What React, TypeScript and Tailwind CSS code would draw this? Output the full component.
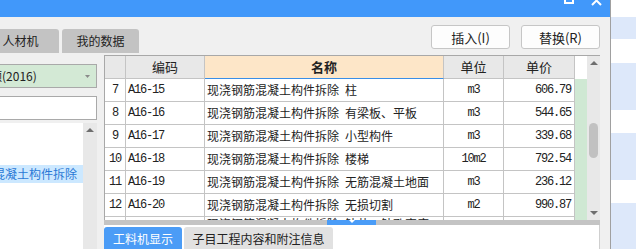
import React from "react"

const rows = [
  { no: "7", code: "A16-15", name: "现浇钢筋混凝土构件拆除\u2002柱", unit: "m3", price: "606.79" },
  { no: "8", code: "A16-16", name: "现浇钢筋混凝土构件拆除\u2002有梁板、平板", unit: "m3", price: "544.65" },
  { no: "9", code: "A16-17", name: "现浇钢筋混凝土构件拆除\u2002小型构件", unit: "m3", price: "339.68" },
  { no: "10", code: "A16-18", name: "现浇钢筋混凝土构件拆除\u2002楼梯", unit: "10m2", price: "792.54" },
  { no: "11", code: "A16-19", name: "现浇钢筋混凝土构件拆除\u2002无筋混凝土地面", unit: "m3", price: "236.12" },
  { no: "12", code: "A16-20", name: "现浇钢筋混凝土构件拆除\u2002无损切割", unit: "m2", price: "990.87" },
]

const sans = "font-['Noto_Sans_CJK_SC',sans-serif]"
const mono = "font-['Liberation_Mono','Noto_Sans_CJK_SC',monospace] text-[12px] tracking-[-1.2px]"
const cell = "border-r border-b border-[#c4c4c4] h-[23px] flex items-center overflow-hidden whitespace-nowrap"

function Arrow({ down = false, color = "#6e6e6e" }: { down?: boolean; color?: string }) {
  return (
    <svg width="8" height="4" viewBox="0 0 8 4">
      <polygon points={down ? "0,0 8,0 4,4" : "4,0 8,4 0,4"} fill={color} />
    </svg>
  )
}

export default function App() {
  return (
    <div className={`w-[636px] h-[249px] overflow-hidden flex bg-white ${sans} text-[#222]`}>
      {/* dialog */}
      <div className="w-[611px] shrink-0 flex flex-col bg-[#f0f0f0] border-r border-[#a0a0a0]">
        <div className="h-[17px] bg-[#4198fa] flex justify-end">
          <svg width="50" height="17" viewBox="0 0 50 17">
            <rect x="5" y="-5" width="8" height="8" fill="none" stroke="white" strokeWidth="2" />
            <path d="M32 -4 L41 5 M41 -4 L32 5" stroke="white" strokeWidth="2" />
          </svg>
        </div>

        <div className="h-[38px] flex justify-between">
          <div className="flex items-end gap-[3px] ml-[-18px] pb-[2px]">
            {["人材机", "我的数据"].map((t) => (
              <div
                key={t}
                className="w-[77px] h-[24px] bg-[#c3c3c3] rounded-t-[3px] flex items-center justify-center text-[12px] leading-none"
              >
                {t}
              </div>
            ))}
          </div>
          <div className="flex gap-[11px] pt-[8px] pr-[10px]">
            {["插入(I)", "替换(R)"].map((t) => (
              <div
                key={t}
                className="w-[79px] h-[24px] bg-[#fdfdfd] border border-[#c6c6c6] rounded-[3px] flex items-center justify-center text-[13px] leading-none"
              >
                {t}
              </div>
            ))}
          </div>
        </div>

        <div className="flex-1 flex min-h-0">
          {/* left panel */}
          <div className="w-[97px] shrink-0 flex flex-col pt-[9px]">
            <div className="h-[24px] bg-[#d3e9d5] border border-[#a9a9a9] border-l-0 flex items-center justify-between overflow-hidden pr-[6px]">
              <span className="text-[12px] leading-none whitespace-nowrap ml-[-10px]">额(2016)</span>
              <svg width="5" height="3" viewBox="0 0 5 3">
                <polygon points="0,0 5,0 2.5,3" fill="#8a8a8a" />
              </svg>
            </div>
            <div className="mt-[8px] h-[24px] bg-white border border-[#a9a9a9] border-l-0" />
            <div className="mt-[3px] flex-1 bg-white flex">
              <div className="flex-1 pt-[42px] overflow-hidden">
                <div className="h-[18px] bg-[#cce8ff] flex items-center overflow-hidden">
                  <span className="text-[12px] leading-none text-[#2a78d6] whitespace-nowrap ml-[-7px]">
                    混凝土构件拆除
                  </span>
                </div>
              </div>
              <div className="w-[14px] bg-[#e8e8e8] flex justify-center pt-[5px]">
                <Arrow />
              </div>
            </div>
          </div>

          {/* table area */}
          <div className="ml-[7px] w-[496px] flex flex-col">
            <div className="h-[170px] flex border-t border-[#a8a8a8] overflow-hidden">
              <div className="w-[471px] border-l border-[#a8a8a8] overflow-hidden">
                <div className="grid grid-cols-[21px_79px_239px_60px_71px]">
                  <div className={`${cell} bg-[#e8e8e8]`} />
                  <div className={`${cell} bg-[#e8e8e8] justify-center text-[13px]`}>编码</div>
                  <div className={`${cell} bg-[#fde6c8] justify-center text-[13px] font-bold border-b-[#3a8ee6]`}>名称</div>
                  <div className={`${cell} bg-[#e8e8e8] justify-center text-[13px]`}>单位</div>
                  <div className={`${cell} bg-[#e8e8e8] justify-center text-[13px]`}>单价</div>
                  {rows.map((r) => (
                    <React.Fragment key={r.no}>
                      <div className={`${cell} bg-white justify-center ${mono}`}>{r.no}</div>
                      <div className={`${cell} bg-white pl-[2px] ${mono}`}>{r.code}</div>
                      <div className={`${cell} bg-white pl-[2px] text-[12px]`}>{r.name}</div>
                      <div className={`${cell} bg-white justify-center ${mono}`}>{r.unit}</div>
                      <div className={`${cell} bg-white justify-end pr-[3px] ${mono}`}>{r.price}</div>
                    </React.Fragment>
                  ))}
                  {/* partly scrolled-in row */}
                  <div className={`${cell} bg-white`} />
                  <div className={`${cell} bg-white`} />
                  <div className={`${cell} bg-white pl-[2px] text-[12px] items-start leading-[12px] pt-[1px]`}>
                    现浇钢筋混凝土构件拆除{"\u2002"}钻芯、钻孔密度
                  </div>
                  <div className={`${cell} bg-white`} />
                  <div className={`${cell} bg-white`} />
                </div>
              </div>
              <div className="w-[12px] flex flex-col">
                <div className="h-[23px] bg-white" />
                <div className="flex-1 bg-[#cfe8d3]" />
              </div>
              <div className="w-[13px] bg-[#e8e8e8] flex flex-col items-center">
                <div className="h-[14px] flex items-center">
                  <Arrow />
                </div>
                <div className="h-[53px]" />
                <div className="w-[9px] h-[35px] rounded-full bg-[#c1c1c1]" />
                <div className="flex-1" />
                <div className="h-[14px] flex items-center">
                  <Arrow down />
                </div>
              </div>
            </div>

            <div className="h-[5px] flex">
              <div className="w-[223px] bg-[#c4c4c4]" />
              <div className="w-[49px] bg-[#4a9cf7] flex justify-center items-start">
                <svg width="6" height="3" viewBox="0 0 6 3">
                  <polygon points="0,0 6,0 3,3" fill="white" />
                </svg>
              </div>
              <div className="flex-1 bg-[#c4c4c4]" />
            </div>

            <div className="flex-1 bg-white border-r border-[#cfcfcf] flex gap-[2px] pt-[2px]">
              <div className="w-[78px] h-[22px] bg-[#4b9cf6] rounded-t-[3px] text-white text-[12px] leading-none flex justify-center pt-[6px]">
                工料机显示
              </div>
              <div className="w-[149px] h-[22px] bg-[#e1e1e1] rounded-t-[3px] text-[12px] leading-none flex justify-center pt-[6px]">
                子目工程内容和附注信息
              </div>
            </div>
          </div>
        </div>
      </div>

      {/* background app strip */}
      <div className="flex-1 flex flex-col">
        <div className="h-[17px] bg-white" />
        <div className="h-[22px] bg-[#dde8fa]" />
        <div className="h-[24px] bg-white" />
        <div className="h-[47px] bg-[#dde8fa]" />
        <div className="h-[23px] bg-white" />
        <div className="h-[47px] bg-[#dde8fa]" />
        <div className="h-[23px] bg-white" />
        <div className="flex-1 bg-[#dde8fa]" />
      </div>
    </div>
  )
}
